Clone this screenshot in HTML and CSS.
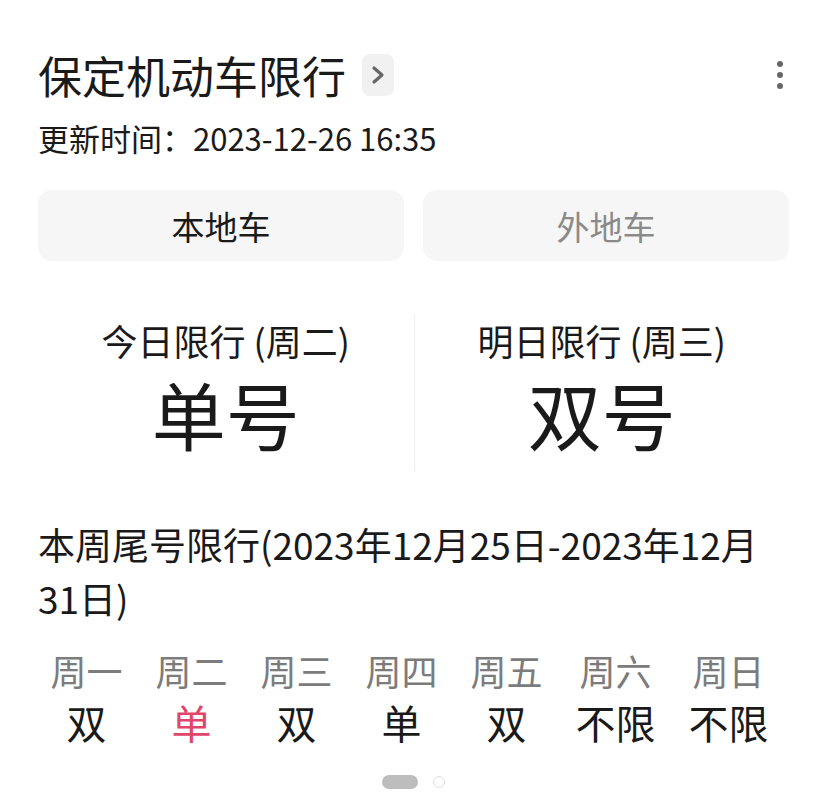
FILE: index.html
```html
<!DOCTYPE html>
<html lang="zh-CN">
<head>
  <meta charset="UTF-8" />
  <meta name="viewport" content="width=device-width, initial-scale=1.0" />
  <title>保定机动车限行</title>
  <link rel="stylesheet" href="styles.css">
</head>
<body>
  <div class="card">
    <!-- Header -->
    <div class="header">
      <div class="title-row">
        <h1>保定机动车限行</h1>
        <span class="chevron">
          <svg width="14" height="20" viewBox="0 0 14 20"><path d="M3 3 L11 10 L3 17" fill="none" stroke="#666" stroke-width="3.2" stroke-linecap="round" stroke-linejoin="round"/></svg>
        </span>
      </div>
      <div class="more">
        <span></span><span></span><span></span>
      </div>
    </div>
    <p class="updated">更新时间：2023-12-26 16:35</p>

    <!-- Tabs -->
    <div class="tabs">
      <div class="tab active">本地车</div>
      <div class="tab">外地车</div>
    </div>

    <!-- Today / tomorrow -->
    <div class="summary">
      <div class="day">
        <div class="day-label">今日限行 (周二)</div>
        <div class="day-value">单号</div>
      </div>
      <div class="day">
        <div class="day-label">明日限行 (周三)</div>
        <div class="day-value">双号</div>
      </div>
    </div>

    <!-- Week -->
    <h2 class="week-title">本周尾号限行(2023年12月25日-2023年12月31日)</h2>
    <div class="week">
      <div class="week-day"><span class="wd">周一</span><span class="wv">双</span></div>
      <div class="week-day today"><span class="wd">周二</span><span class="wv">单</span></div>
      <div class="week-day"><span class="wd">周三</span><span class="wv">双</span></div>
      <div class="week-day"><span class="wd">周四</span><span class="wv">单</span></div>
      <div class="week-day"><span class="wd">周五</span><span class="wv">双</span></div>
      <div class="week-day"><span class="wd">周六</span><span class="wv">不限</span></div>
      <div class="week-day"><span class="wd">周日</span><span class="wv">不限</span></div>
    </div>

    <div class="pager">
      <span class="pill"></span>
      <span class="dot"></span>
    </div>
  </div>
</body>
</html>
```

FILE: styles.css
```css
body {
  margin: 0;
  background: #fff;
  font-family: 'Noto Sans CJK SC', 'Noto Sans', sans-serif;
  color: #1a1a1a;
}
.card {
  padding: 46px 37px 0 38px;
}
.header {
  display: flex;
  justify-content: space-between;
  align-items: flex-start;
}
.title-row {
  display: flex;
  align-items: center;
  gap: 16px;
}
h1 {
  margin: 0;
  font-size: 44px;
  font-weight: 400;
  line-height: 58px;
}
.chevron {
  display: flex;
  align-items: center;
  justify-content: center;
  width: 32px;
  height: 42px;
  border-radius: 8px;
  background: #f1f1f1;
}
.more {
  display: flex;
  flex-direction: column;
  gap: 5px;
  padding: 15px 6px 0 0;
}
.more span {
  width: 6px;
  height: 6px;
  border-radius: 50%;
  background: #666;
}
.updated {
  margin: 14px 0 0;
  font-size: 31px;
  line-height: 40px;
}

.tabs {
  display: flex;
  gap: 19px;
  margin-top: 32px;
}
.tab {
  flex: 1;
  height: 71px;
  border-radius: 14px;
  background: #f6f6f6;
  display: flex;
  align-items: center;
  justify-content: center;
  font-size: 33px;
  color: #8a8a8a;
}
.tab.active {
  color: #1a1a1a;
}

.summary {
  display: grid;
  grid-template-columns: 1fr 1fr;
  margin-top: 54px;
}
.day {
  text-align: center;
  padding: 2px 0 8px;
}
.day + .day {
  border-left: 1px solid #eee;
}
.day-label {
  font-size: 36px;
  line-height: 46px;
}
.day-value {
  font-size: 74px;
  line-height: 100px;
}

.week-title {
  margin: 46px 0 0;
  font-size: 37px;
  font-weight: 400;
  line-height: 54px;
}
.week {
  display: flex;
  justify-content: center;
  gap: 33px;
  margin-top: 22px;
  padding-right: 8px;
}
.week-day {
  display: flex;
  flex-direction: column;
  align-items: center;
}
.wd {
  font-size: 36px;
  line-height: 46px;
  color: #7c7c7c;
}
.wv {
  font-size: 40px;
  line-height: 58px;
  color: #1a1a1a;
}
.week-day.today .wv {
  color: #e2456a;
}

.pager {
  display: flex;
  justify-content: center;
  align-items: center;
  gap: 15px;
  margin-top: 24px;
}
.pill {
  width: 36px;
  height: 14px;
  border-radius: 7px;
  background: #bdbdbd;
}
.dot {
  width: 10px;
  height: 10px;
  border-radius: 50%;
  border: 1px solid #ddd;
}
```
